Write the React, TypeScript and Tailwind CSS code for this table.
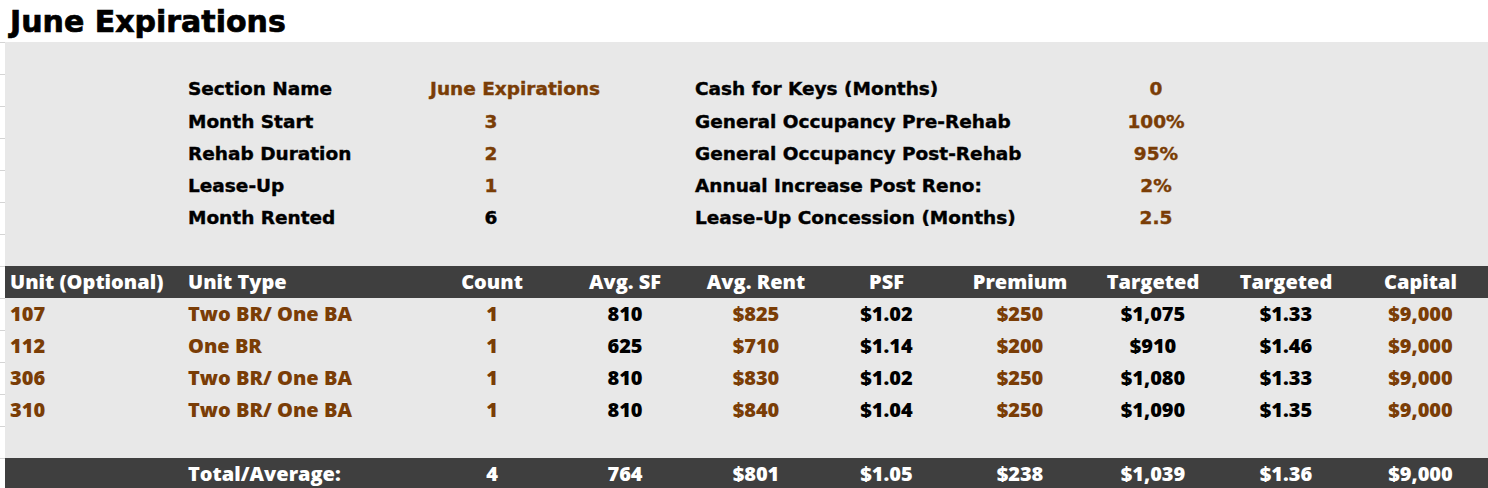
const BROWN = 'text-[#7a3d06]';

type Cell = { v: string; brown?: boolean };

const params = [
  ['Section Name', 'June Expirations', 'Cash for Keys (Months)', '0'],
  ['Month Start', '3', 'General Occupancy Pre-Rehab', '100%'],
  ['Rehab Duration', '2', 'General Occupancy Post-Rehab', '95%'],
  ['Lease-Up', '1', 'Annual Increase Post Reno:', '2%'],
  ['Month Rented', '6', 'Lease-Up Concession (Months)', '2.5'],
];

// brown = input cells, black = computed
const leftBrown = [true, true, true, true, false];

const headers = ['Unit (Optional)', 'Unit Type', 'Count', 'Avg. SF', 'Avg. Rent', 'PSF', 'Premium', 'Targeted', 'Targeted', 'Capital'];

const units: Cell[][] = [
  [{ v: '107', brown: true }, { v: 'Two BR/ One BA', brown: true }, { v: '1', brown: true }, { v: '810' }, { v: '$825', brown: true }, { v: '$1.02' }, { v: '$250', brown: true }, { v: '$1,075' }, { v: '$1.33' }, { v: '$9,000', brown: true }],
  [{ v: '112', brown: true }, { v: 'One BR', brown: true }, { v: '1', brown: true }, { v: '625' }, { v: '$710', brown: true }, { v: '$1.14' }, { v: '$200', brown: true }, { v: '$910' }, { v: '$1.46' }, { v: '$9,000', brown: true }],
  [{ v: '306', brown: true }, { v: 'Two BR/ One BA', brown: true }, { v: '1', brown: true }, { v: '810' }, { v: '$830', brown: true }, { v: '$1.02' }, { v: '$250', brown: true }, { v: '$1,080' }, { v: '$1.33' }, { v: '$9,000', brown: true }],
  [{ v: '310', brown: true }, { v: 'Two BR/ One BA', brown: true }, { v: '1', brown: true }, { v: '810' }, { v: '$840', brown: true }, { v: '$1.04' }, { v: '$250', brown: true }, { v: '$1,090' }, { v: '$1.35' }, { v: '$9,000', brown: true }],
];

const totals = ['', 'Total/Average:', '4', '764', '$801', '$1.05', '$238', '$1,039', '$1.36', '$9,000'];

const tableCols = 'grid grid-cols-[178px_243px_132px_134px_128px_133px_134px_132px_134px_135px]';

function TableRow({ cells, className }: { cells: Cell[]; className?: string }) {
  return (
    <div className={`${tableCols} h-[32px] items-center ${className ?? ''}`}>
      {cells.map((c, i) => (
        <div
          key={i}
          className={`whitespace-nowrap ${i < 2 ? 'pl-[5px] text-left' : 'text-center'} ${c.brown ? BROWN : ''}`}
        >
          {c.v}
        </div>
      ))}
    </div>
  );
}

export default function App() {
  return (
    <div className="w-[1488px] h-[488px] overflow-hidden bg-white text-black">
      <div className="h-[42px] pl-[10px] flex items-center font-['DejaVu_Sans',sans-serif] font-bold text-[30px] [-webkit-text-stroke:0.7px_currentColor]">
        June Expirations
      </div>

      <div className="flex">
        {/* spreadsheet row lines peeking out on the left */}
        <div className="w-[5px] shrink-0">
          {Array.from({ length: 14 }).map((_, i) => (
            <div key={i} className="h-[32px] border-t border-[#d4d4d4]" />
          ))}
        </div>

        <div className="flex-1 bg-[#e8e8e8]">
          <div className="pt-[30px] pb-[32px] font-['DejaVu_Sans',sans-serif] font-bold text-[18.5px] [-webkit-text-stroke:0.4px_currentColor]">
            {params.map((r, i) => (
              <div
                key={i}
                className={`grid grid-cols-[183px_242px_122px_143px_400px_122px_1fr] items-center ${i === 0 ? 'h-[34px]' : 'h-[32px]'}`}
              >
                <div />
                <div className="whitespace-nowrap">{r[0]}</div>
                <div className={`whitespace-nowrap ${i === 0 ? 'text-left' : 'text-center'} ${leftBrown[i] ? BROWN : ''}`}>
                  {r[1]}
                </div>
                <div />
                <div className="whitespace-nowrap">{r[2]}</div>
                <div className={`whitespace-nowrap text-center ${BROWN}`}>{r[3]}</div>
                <div />
              </div>
            ))}
          </div>

          <div className="font-['Open_Sans',sans-serif] font-extrabold text-[20px]">
            <TableRow cells={headers.map((h) => ({ v: h }))} className="bg-[#3f3f3f] text-white" />
            {units.map((u, i) => (
              <TableRow key={i} cells={u} />
            ))}
            <div className="h-[32px]" />
            <TableRow cells={totals.map((t) => ({ v: t }))} className="bg-[#3f3f3f] text-white" />
          </div>
        </div>
      </div>
    </div>
  );
}
